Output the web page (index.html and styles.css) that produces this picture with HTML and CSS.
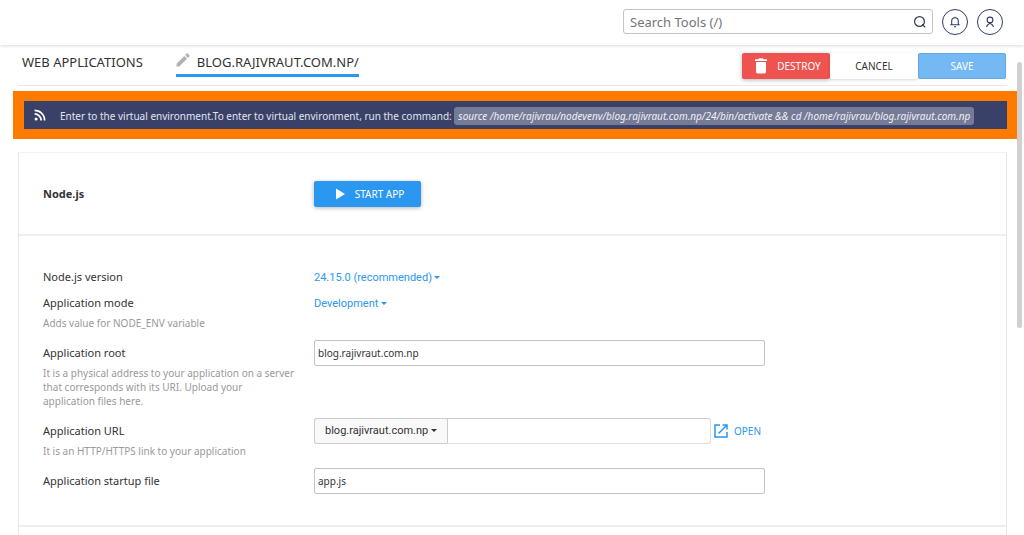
FILE: index.html
```html
<!DOCTYPE html>
<html lang="en">
<head>
<meta charset="utf-8">
<title>Web Applications</title>
<link rel="stylesheet" href="styles.css">
</head>
<body>
<header class="topbar">
  <form class="search" role="search">
    <input class="search-input" type="text" placeholder="Search Tools (/)" aria-label="Search Tools">
    <button class="search-button" type="button" aria-label="Search">
      <svg width="14" height="14" viewBox="0 0 14 14" fill="none" stroke="#2f3c4c" stroke-width="1.2"><circle cx="6.5" cy="6.5" r="4.9"/><path d="M9.2 9.2l3 3.200"/></svg>
    </button>
  </form>
  <button class="round" type="button" aria-label="Notifications">
    <svg width="12" height="12" viewBox="0 0 12 12" fill="none" stroke="#323a66" stroke-width="1.1"><path d="M1.3 8.7h9.4M2.7 8.5V5a3.3 3.3 0 0 1 6.6 0v3.500M6 1.700V.7M5 10.700h2"/></svg>
  </button>
  <button class="round" type="button" aria-label="Account">
    <svg width="12" height="12" viewBox="0 0 12 12" fill="none" stroke="#323a66" stroke-width="1.1"><circle cx="6" cy="4" r="2.900"/><path d="M4.400 6.300L7.600 8.200c1 .6 1.600 1.300 1.800 2.800M7.600 6.300L4.400 8.200c-1 .6-1.600 1.300-1.800 2.800"/></svg>
  </button>
</header>

<main class="page">
  <div class="toolbar">
    <nav class="tabs">
      <a class="tab" href="#">WEB APPLICATIONS</a>
      <a class="tab tab-active" href="#">
        <svg class="pencil" width="14" height="14" viewBox="0 0 14 14" fill="#b0b3b8"><path d="M.5 10.700L8.300 2.900l2.800 2.800-7.800 7.800H.5zM9.100 2.100L10.600.6a.9.9 0 0 1 1.200 0l1.600 1.600a.9.9 0 0 1 0 1.200l-1.500 1.500z"/></svg>
        <span>BLOG.RAJIVRAUT.COM.NP/</span>
      </a>
    </nav>
    <div class="actions">
      <button class="btn btn-destroy" type="button">
        <svg width="12" height="16" viewBox="0 0 12 16" fill="#fff"><path d="M0 1.300h3.300L4.200.3h3.600l.9 1H12V3H0zM1 4h10v9.800c0 .9-.7 1.700-1.600 1.700H2.600C1.700 15.500 1 14.700 1 13.800z"/></svg>
        <span>DESTROY</span>
      </button>
      <button class="btn btn-cancel" type="button">CANCEL</button>
      <button class="btn btn-save" type="button">SAVE</button>
    </div>
  </div>

  <section class="notice">
    <div class="notice-body">
      <svg class="feed" width="12" height="12" viewBox="0 0 12 12" fill="none" stroke="#fff" stroke-width="1.700"><circle cx="2.100" cy="9.900" r="1.500" fill="#fff" stroke="none"/><path d="M.6 4.900a6.500 6.500 0 0 1 6.500 6.500M.6 1.300a10 10 0 0 1 10 10.100"/></svg>
      <p class="notice-text">Enter to the virtual environment.To enter to virtual environment, run the command: <code class="command">source /home/rajivrau/nodevenv/blog.rajivraut.com.np/24/bin/activate &amp;&amp; cd /home/rajivrau/blog.rajivraut.com.np</code></p>
    </div>
  </section>

  <form class="card">
    <section class="panel panel-status">
      <h1 class="title">Node.js</h1>
      <div>
        <button class="btn btn-start" type="button">
          <svg width="9" height="12" viewBox="0 0 9 12" fill="#fff"><path d="M0 .5v11L9 6z"/></svg>
          <span>START APP</span>
        </button>
      </div>
    </section>

    <section class="panel panel-settings">
      <div class="field field-tight">
        <label class="label" for="version">Node.js version</label>
        <div class="control"><span class="picker link-picker"><select id="version"><option>24.15.0 (recommended)</option></select></span></div>
      </div>
      <div class="field">
        <div>
          <label class="label" for="mode">Application mode</label>
          <p class="hint">Adds value for NODE_ENV variable</p>
        </div>
        <div class="control"><span class="picker link-picker"><select id="mode"><option>Development</option></select></span></div>
      </div>
      <div class="field">
        <div>
          <label class="label" for="root">Application root</label>
          <p class="hint">It is a physical address to your application on a server that corresponds with its URI. Upload your application files here.</p>
        </div>
        <div class="control"><input class="input" id="root" type="text" value="blog.rajivraut.com.np"></div>
      </div>
      <div class="field">
        <div>
          <label class="label" for="path">Application URL</label>
          <p class="hint">It is an HTTP/HTTPS link to your application</p>
        </div>
        <div class="control">
          <span class="picker domain-picker"><select aria-label="Domain"><option>blog.rajivraut.com.np</option></select></span>
          <input class="input path-input" id="path" type="text">
          <a class="open" href="#">
            <svg width="14" height="14" viewBox="0 0 14 14" fill="none" stroke="#2a97f0" stroke-width="1.500"><path d="M6 1H1v12h12V8M8.500 1H13v4.500M13 1L4.500 9.500"/></svg>
            <span>OPEN</span>
          </a>
        </div>
      </div>
      <div class="field">
        <label class="label" for="startup">Application startup file</label>
        <div class="control"><input class="input" id="startup" type="text" value="app.js"></div>
      </div>
    </section>
    <section class="panel panel-next"></section>
  </form>
</main>
<div class="scroll-thumb"></div>
</body>
</html>
```

FILE: styles.css
```css
* { box-sizing: border-box; }

html { height: 100%; }

body {
  display: flex;
  flex-direction: column;
  height: 100%;
  margin: 0;
  overflow: hidden;
  background: #fff;
  color: #333;
  font-family: "Noto Sans", sans-serif;
  font-size: 11px;
}

button, input, select { font-family: inherit; margin: 0; }
a { text-decoration: none; }
h1, p { margin: 0; }
svg { flex: none; display: block; }

.topbar {
  display: flex;
  flex: none;
  align-items: center;
  justify-content: flex-end;
  gap: 9px;
  height: 45px;
  padding: 0 21px 2px;
  box-shadow: 0 1px 3px rgba(0, 0, 0, 0.15);
}

.search {
  display: flex;
  align-items: center;
  width: 310px;
  height: 25px;
  border: 1px solid #c3c3d0;
  border-radius: 3px;
}

.search-input {
  flex: 1;
  min-width: 0;
  padding: 0 6px;
  border: 0;
  outline: 0;
  background: none;
  font-size: 13px;
}

.search-input::placeholder { color: #757575; }

.search-button {
  padding: 0 5px;
  border: 0;
  background: none;
}

.round {
  display: flex;
  align-items: center;
  justify-content: center;
  width: 26px;
  height: 26px;
  padding: 0;
  border: 1px solid #323a66;
  border-radius: 50%;
  background: #fff;
}

.page {
  flex: 1;
  display: flex;
  flex-direction: column;
  min-height: 0;
  padding: 0 17px 0 18px;
}

.toolbar {
  display: flex;
  flex: none;
  justify-content: space-between;
  align-items: center;
  height: 41px;
  border-bottom: 1px solid #e8e8e8;
}

.tabs {
  display: flex;
  gap: 33px;
  padding-left: 4px;
  margin-bottom: 4px;
}

.tab {
  display: flex;
  align-items: center;
  gap: 7px;
  height: 28px;
  border-bottom: 3px solid transparent;
  color: #333;
  font-size: 13px;
}

.tab-active {
  border-color: #2a97f0;
}

.pencil { margin-bottom: 3px; }

.actions {
  display: flex;
  padding: 2px 1px 0 0;
}

.btn {
  display: flex;
  align-items: center;
  justify-content: center;
  gap: 10px;
  height: 26px;
  padding: 0;
  border: 0;
  border-radius: 2px;
  box-shadow: 0 1px 4px rgba(0, 0, 0, 0.3);
  color: #fff;
  font-size: 10px;
}

.actions .btn { width: 88px; }
.actions .btn-destroy { background: #ef5350; padding-left: 4px; }
.actions .btn-cancel { background: #fff; color: #333; box-shadow: 0 1px 3px rgba(0, 0, 0, 0.15); }
.actions .btn-save { background: #74b9f4; border: 1px solid #62a8e4; box-shadow: none; }

.btn-start {
  width: 107px;
  padding-left: 5px;
  background: #2a97f0;
}

.notice {
  flex: none;
  margin: 5px -11px 0 -5px;
  padding: 10px 11px;
  background: #ff7b00;
}

.notice-body {
  display: flex;
  align-items: center;
  gap: 14px;
  min-height: 28px;
  padding: 2px 10px 0;
  background: #3a4168;
}

.feed { margin-bottom: 2px; }

.notice-text {
  color: #e2e4ec;
  font-size: 10px;
  white-space: nowrap;
}

.command {
  padding: 2px 4px;
  border-radius: 3px;
  background: #757a97;
  color: #f0f1f5;
  font-family: inherit;
  font-style: italic;
}

.card {
  display: flex;
  flex: 1;
  flex-direction: column;
  margin-top: 13px;
  border: 1px solid #e8e8e8;
  border-top-color: #f3f3f3;
  border-bottom: 0;
}

.panel {
  flex: none;
  padding: 28px 24px 21px;
  border-bottom: 2px solid #eee;
}

.panel-status {
  display: grid;
  grid-template-columns: 271px 1fr;
  align-items: center;
  padding: 28px 24px 27px;
}

.panel-next { flex: 1; border: 0; padding: 0; }

.title {
  font-size: 11px;
  line-height: 26px;
}

.field {
  display: grid;
  grid-template-columns: 271px minmax(0, 451px);
  align-items: start;
  margin-bottom: 10px;
}

.field-tight { margin-bottom: 0; }

.label {
  display: block;
  line-height: 26px;
}

.hint {
  max-width: 252px;
  color: #999;
  font-size: 10px;
  line-height: 14px;
}

.control {
  display: flex;
  align-items: center;
  height: 26px;
}

.input {
  flex: 1;
  min-width: 0;
  height: 26px;
  padding: 0 3px;
  border: 1px solid #c4c4c4;
  border-radius: 2px;
  background: #fff;
  color: #333;
  font-size: 10px;
}

.picker {
  display: flex;
  align-items: center;
  gap: 2px;
  font-family: Roboto, sans-serif;
}

.picker::after {
  content: "";
  border: 3px solid transparent;
  border-top-color: currentColor;
  border-bottom: 0;
}

.picker select {
  appearance: none;
  padding: 0;
  border: 0;
  background: none;
  color: inherit;
  font-size: 11px;
}

.link-picker { color: #2a97f0; }

.domain-picker {
  height: 26px;
  padding: 0 10px 2px;
  border: 1px solid #ccc;
  border-right: 0;
  border-radius: 3px 0 0 3px;
  background: #f9f9f9;
}

.path-input { border-color: #ccc #ddd #ddd #ccc; border-radius: 0 3px 3px 0; }

.open {
  display: flex;
  align-items: center;
  gap: 6px;
  padding: 0 4px 0 3px;
  color: #2a97f0;
  font-size: 10px;
}

.scroll-thumb {
  position: absolute;
  top: 62px;
  right: 2px;
  width: 5px;
  height: 266px;
  border-radius: 3px;
  background: #d0d0d0;
}
```
